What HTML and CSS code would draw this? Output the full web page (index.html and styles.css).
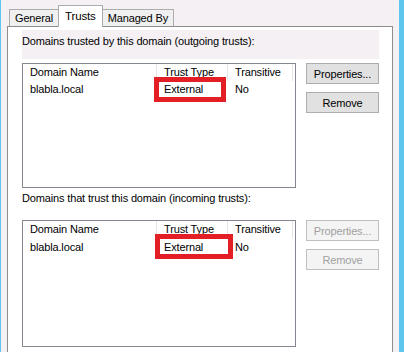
FILE: index.html
```html
<!DOCTYPE html>
<html lang="en">
<head>
    <meta charset="UTF-8">
    <title>Domain Properties - Trusts</title>
    <link rel="stylesheet" href="styles.css">
</head>
<body>
<div class="dialog">

    <!-- tab strip -->
    <div class="tabs">
        <div class="tab">General</div>
        <div class="tab tab-active">Trusts</div>
        <div class="tab">Managed By</div>
    </div>

    <!-- trusts page -->
    <div class="panel">
        <div class="group-label">Domains trusted by this domain (outgoing trusts):</div>

        <div class="trust-section">
            <div class="list">
                <div class="list-row list-header">
                    <span class="col-name">Domain Name</span>
                    <span class="col-type">Trust Type</span>
                    <span class="col-trans">Transitive</span>
                </div>
                <div class="list-row">
                    <span class="col-name">blabla.local</span>
                    <span class="col-type">External</span>
                    <span class="col-trans">No</span>
                </div>
                <span class="mark mark-out"></span>
            </div>
            <div class="buttons">
                <button>Properties...</button>
                <button>Remove</button>
            </div>
        </div>

        <div class="plain-label">Domains that trust this domain (incoming trusts):</div>

        <div class="trust-section trust-section-in">
            <div class="list">
                <div class="list-row list-header">
                    <span class="col-name">Domain Name</span>
                    <span class="col-type">Trust Type</span>
                    <span class="col-trans">Transitive</span>
                </div>
                <div class="list-row list-row-in">
                    <span class="col-name">blabla.local</span>
                    <span class="col-type">External</span>
                    <span class="col-trans">No</span>
                </div>
                <span class="mark mark-in"></span>
            </div>
            <div class="buttons">
                <button disabled>Properties...</button>
                <button disabled>Remove</button>
            </div>
        </div>
    </div>
</div>
</body>
</html>
```

FILE: styles.css
```css
html, body {
    height: 100%;
    overflow: hidden;
}

body {
    margin: 0;
    background-color: #f4f0f4;
    border-left: 1px solid #5ec6ec;
    border-right: 5px solid #5ec6ec;
    box-sizing: border-box;
    font-family: "Liberation Sans", Arial, sans-serif;
    font-size: 11px;
    letter-spacing: -0.15px;
    color: black;
}

.dialog {
    height: 100%;
    box-sizing: border-box;
    padding: 10px 6px 0 6px;
    display: flex;
    flex-direction: column;
}

.tabs {
    display: flex;
    align-items: flex-end;
    height: 16px;
    padding-left: 2px;
    position: relative;
    z-index: 1;
}

.tab {
    height: 17px;
    line-height: 16px;
    padding: 0 5px;
    background-color: #f0f0f0;
    border: 1px solid #acacac;
    border-bottom: none;
    box-sizing: border-box;
}

.tab + .tab {
    margin-left: -1px;
}

.tab-active {
    height: 22px;
    line-height: 20px;
    background-color: white;
    padding: 0 6px;
    margin-bottom: -1px;
    font-size: 11.5px;
}

.panel {
    flex: 1;
    background-color: white;
    border: 1px solid #8d8d8d;
    border-bottom: none;
    padding: 3px 13px 0 14px;
}

.group-label {
    width: 357px;
    height: 29px;
    background-color: #f4f0f4;
    padding-top: 5px;
    box-sizing: border-box;
}

.trust-section {
    display: flex;
    margin-top: 4px;
}

.list {
    position: relative;
    width: 274px;
    height: 125px;
    border: 1px solid #828790;
    box-sizing: border-box;
}

.trust-section-in .list {
    height: 127px;
}

.list-row {
    display: flex;
    height: 17px;
    line-height: 17px;
}

.list-row-in {
    margin-top: 1px;
}

.list-row span {
    padding-left: 7px;
    box-sizing: border-box;
    white-space: nowrap;
}

.list-header span {
    border-right: 1px solid #e5e5e5;
}

.col-name {
    width: 134px;
}

.col-type {
    width: 71px;
}

.col-trans {
    width: 65px;
}

.mark {
    position: absolute;
    border: 5px solid #e31e25;
    height: 25px;
    box-sizing: border-box;
}

.mark-out {
    left: 131px;
    top: 13px;
    width: 72px;
}

.mark-in {
    left: 132px;
    top: 13px;
    width: 78px;
}

.buttons {
    display: flex;
    flex-direction: column;
    gap: 8px;
    margin-left: 10px;
}

button {
    width: 73px;
    height: 21px;
    font-family: inherit;
    font-size: 11px;
    letter-spacing: inherit;
    color: black;
    background-color: #e1e1e1;
    border: 1px solid #adadad;
    padding: 0;
}

button:disabled {
    color: #a0a0a0;
    background-color: #f4f4f4;
    border-color: #bfbfbf;
}

.plain-label {
    margin-top: 4px;
    height: 24px;
}
```
